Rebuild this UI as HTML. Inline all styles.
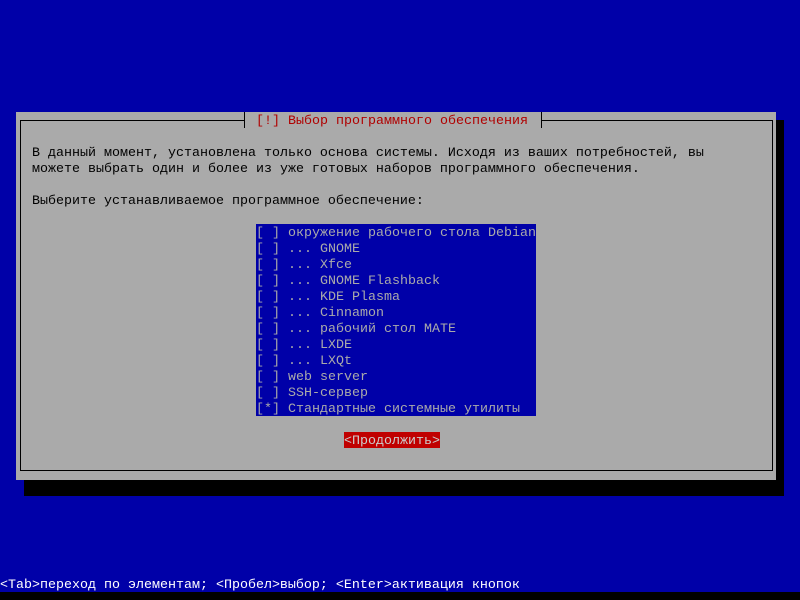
<!DOCTYPE html>
<html><head><meta charset="utf-8"><style>
body{margin:0;width:800px;height:600px;background:#0000a8;position:relative;overflow:hidden;font-family:"Liberation Mono","DejaVu Sans Mono",monospace;font-size:13.33px;}
.t{position:absolute;white-space:pre;line-height:16px;height:16px;}
.s{position:relative;top:2px;}
.d{position:absolute;}
</style></head><body>
<div class="d" style="left:24px;top:120px;width:760px;height:376px;background:#000"></div>
<div class="d" style="left:16px;top:112px;width:760px;height:368px;background:#aaa"></div>
<div class="d" style="left:20px;top:120px;width:751px;height:349px;border:1px solid #000"></div>
<div class="d" style="left:244px;top:112px;width:296px;height:16px;background:#aaa;border-left:1px solid #000;border-right:1px solid #000"></div>
<div class="t" style="left:256px;top:112px;color:#b00000"><span class="s">[!] Выбор программного обеспечения</span></div>
<div class="t" style="left:32px;top:144px;color:#000"><span class="s">В данный момент, установлена только основа системы. Исходя из ваших потребностей, вы</span></div>
<div class="t" style="left:32px;top:160px;color:#000"><span class="s">можете выбрать один и более из уже готовых наборов программного обеспечения.</span></div>
<div class="t" style="left:32px;top:192px;color:#000"><span class="s">Выберите устанавливаемое программное обеспечение:</span></div>
<div class="d" style="left:256px;top:224px;width:280px;height:192px;background:#0000a8"></div>
<div class="t" style="left:256px;top:224px;color:#aaa;line-height:16px;height:auto"><span class="s">[ ] окружение рабочего стола Debian
[ ] ... GNOME
[ ] ... Xfce
[ ] ... GNOME Flashback
[ ] ... KDE Plasma
[ ] ... Cinnamon
[ ] ... рабочий стол MATE
[ ] ... LXDE
[ ] ... LXQt
[ ] web server
[ ] SSH-сервер
[*] Стандартные системные утилиты</span></div>
<div class="t" style="left:344px;top:432px;width:96px;background:#c00000;color:#ccc"><span class="s">&lt;Продолжить&gt;</span></div>
<div class="t" style="left:0;top:576px;color:#fff"><span class="s">&lt;Tab&gt;переход по элементам; &lt;Пробел&gt;выбор; &lt;Enter&gt;активация кнопок</span></div>
<div class="d" style="left:0;top:592px;width:800px;height:8px;background:#000"></div>
</body></html>
